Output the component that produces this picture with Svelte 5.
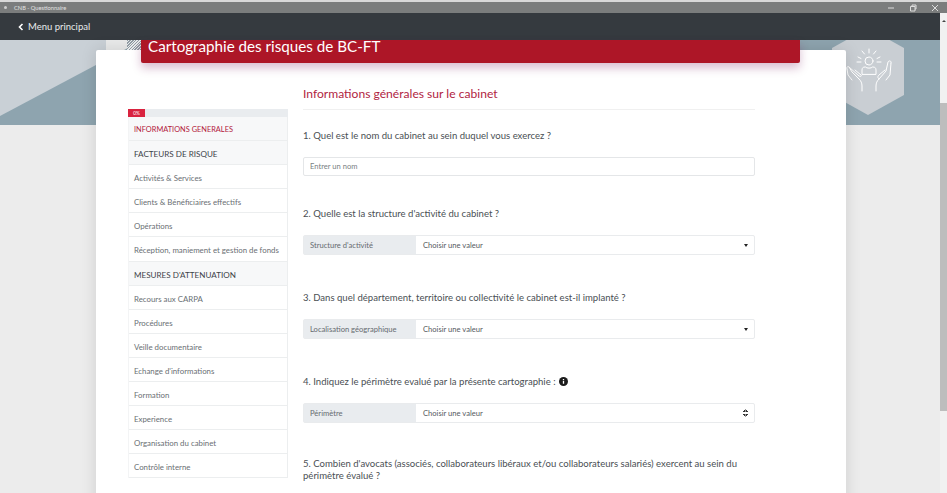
<script>
  const nav = [
    { t: 'INFORMATIONS GENERALES', k: 'active' },
    { t: 'FACTEURS DE RISQUE', k: 'head' },
    { t: 'Activités & Services' },
    { t: 'Clients & Bénéficiaires effectifs' },
    { t: 'Opérations' },
    { t: 'Réception, maniement et gestion de fonds' },
    { t: "MESURES D'ATTENUATION", k: 'head' },
    { t: 'Recours aux CARPA' },
    { t: 'Procédures' },
    { t: 'Veille documentaire' },
    { t: "Echange d'informations" },
    { t: 'Formation' },
    { t: 'Experience' },
    { t: 'Organisation du cabinet' },
    { t: 'Contrôle interne' }
  ];
</script>

<div class="window">
  <div class="titlebar">
    <div class="tb-left"><span class="dot"></span><span>CNB - Questionnaire</span></div>
    <div class="tb-right">
      <svg width="8" height="8" viewBox="0 0 8 8"><path d="M1 4h6" stroke="#ddd" fill="none"/></svg>
      <svg width="8" height="8" viewBox="0 0 8 8"><path d="M1.500 2.500h4.500v4.500h-4.500zM3 2.500v-1.500h4v4h-1" stroke="#ddd" fill="none"/></svg>
      <svg width="8" height="8" viewBox="0 0 8 8"><path d="M1 1l6 6M7 1l-6 6" stroke="#ddd" fill="none"/></svg>
    </div>
  </div>
  <div class="body">
    <div class="page">
      <header class="topnav">
        <svg width="6" height="8" viewBox="0 0 6 8"><path d="M4.500 1L1.500 4l3 3" stroke="#fff" stroke-width="1.600" fill="none"/></svg>
        <span>Menu principal</span>
      </header>
      <div class="content">
        <div class="hero">
          <svg class="hero-shape" width="940" height="85" viewBox="0 0 940 85">
            <rect x="106" width="40" height="12" fill="#e9eaea"/>
            <polygon points="0,76 143,0 940,0 940,85 0,85" fill="#8ea4af"/>
            <polygon points="868,-12 904,8 904,55 868,75 832,55 832,8" fill="#c9ced3"/>
          </svg>
          <svg class="hands" width="50" height="46" viewBox="0 0 50 46" fill="none" stroke="#fff" stroke-width="1" stroke-linecap="round" stroke-linejoin="round">
            <circle cx="25" cy="13" r="4"/>
            <path d="M18 26v-4c0-2 1-3 3-3h.500c1 1.500 6 1.500 7 0h.500c2 0 3 1 3 3v4z"/>
            <path d="M25 1v4M18 3l2.500 3M32 3l-2.500 3M14 9l3 1.500M36 9l-3 1.500M13 14h4M33 14h4"/>
            <path d="M3 21c-1-2 1-3 2-2l3 5 7 7c2 2 3 4 3 7v5M8 32l-4-5-1-6M5 19l10 9c2 1 3 0 2-1l-6-5"/>
            <path d="M47 15c1-2-2-3-3-1l-2 9-7 8c-2 2-3 4-3 7v5M42 32l4-5 1-12M35 31c-1-1-2-2 0-4l6-5"/>
          </svg>
        </div>
        <div class="card">
          <div class="banner-row">
            <h1 class="banner">Cartographie des risques de BC-FT</h1>
          </div>
          <div class="columns">
            <aside class="side">
              <div class="progress"><span class="chip">0%</span></div>
              <ul>
                {#each nav as n}
                  <li class={n.k ?? ''}>{n.t}</li>
                {/each}
              </ul>
            </aside>
            <section class="form">
              <h2>Informations générales sur le cabinet</h2>
              <p class="q q1">1. Quel est le nom du cabinet au sein duquel vous exercez ?</p>
              <div class="input">Entrer un nom</div>
              <p class="q q2">2. Quelle est la structure d'activité du cabinet ?</p>
              <div class="group">
                <span class="label">Structure d'activité</span>
                <span class="select">Choisir une valeur<i class="caret"></i></span>
              </div>
              <p class="q q3">3. Dans quel département, territoire ou collectivité le cabinet est-il implanté ?</p>
              <div class="group">
                <span class="label">Localisation géographique</span>
                <span class="select">Choisir une valeur<i class="caret"></i></span>
              </div>
              <p class="q q3">4. Indiquez le périmètre evalué par la présente cartographie :
                <svg class="info" width="9" height="9" viewBox="0 0 9 9"><circle cx="4.500" cy="4.500" r="4.500" fill="#1c1c1c"/><path d="M4.500 2v.9M4.500 3.800v3" stroke="#fff" stroke-width="1.300"/></svg>
              </p>
              <div class="group">
                <span class="label">Périmètre</span>
                <span class="select">Choisir une valeur<i class="updown"></i></span>
              </div>
              <p class="q q5">5. Combien d'avocats (associés, collaborateurs libéraux et/ou collaborateurs salariés) exercent au sein du périmètre évalué ?</p>
            </section>
          </div>
        </div>
      </div>
    </div>
    <div class="scrollbar">
      <span class="arrow"></span>
      <span class="thumb"></span>
    </div>
  </div>
</div>

<style>
  :global(body) { margin: 0; overflow: hidden; background: #ececec; }
  .window { width: 947px; height: 493px; overflow: hidden; display: flex; flex-direction: column; font-family: Lato, sans-serif; color: #4a4f54; border-top: 2px solid #d9d9d9; box-sizing: border-box; }
  .titlebar { height: 11px; flex: none; background: #7b7d7d; display: flex; justify-content: space-between; align-items: center; color: #e2e2e2; font-size: 5.700px; padding: 0 8px 0 4px; }
  .tb-left { display: flex; align-items: center; gap: 7px; }
  .dot { width: 3px; height: 3px; border-radius: 50%; background: #cfcfcf; }
  .tb-right { display: flex; gap: 14px; }
  .body { flex: 1; display: flex; min-height: 0; }
  .page { width: 940px; flex: none; }
  .topnav { height: 27px; background: #353a3f; color: #e8eaeb; display: flex; align-items: center; gap: 4px; padding-left: 18px; font-size: 9.500px; }
  .content { position: relative; padding-top: 10px; }
  .hero { position: absolute; inset: 0 0 auto 0; height: 85px; background: #c9d0d6; overflow: hidden; }
  .hero-shape { display: block; overflow: visible; }
  .hands { position: absolute; left: 844px; top: 8px; }
  .card { position: relative; width: 750px; margin: 0 0 0 96px; background: #fff; box-shadow: 0 0 16px rgba(0,0,0,.13); border-radius: 2px; height: 460px; }
  .banner-row { height: 0; padding-left: 45px; position: relative; }
  .banner-row::before { content: ""; position: absolute; left: 31px; top: -10px; width: 14px; height: 10px; background: repeating-linear-gradient(135deg, #8f9aa2 0 1px, #e6e9ea 1px 2px); }
  .banner { position: relative; margin: 0; width: 659px; height: 23px; transform: translateY(-10px); background: #ad1627; color: #fff; font-weight: 400; font-size: 15.200px; line-height: 13px; padding-left: 7px; box-sizing: border-box; border-radius: 0 0 2px 2px; box-shadow: 0 5px 10px rgba(120,20,90,.28); }
  .columns { display: flex; padding: 59px 0 0 32px; gap: 15px; }
  .side { width: 160px; flex: none; }
  .progress { height: 8px; background: #e9ecef; display: flex; }
  .chip { width: 17px; background: #d9233f; color: #fff; font-size: 4.800px; line-height: 8px; text-align: center; }
  ul { list-style: none; margin: 0; padding: 0; border-right: 1px solid #eceeef; border-left: 1px solid #f3f4f5; }
  li { height: 24.100px; line-height: 26px; box-sizing: border-box; border-bottom: 1px solid #eceeef; padding-left: 5px; font-size: 7.850px; color: #6a6f74; white-space: nowrap; overflow: hidden; }
  li.active { background: #f7f8f9; color: #b3203c; font-size: 7.400px; }
  li.head { background: #f7f8f9; color: #3d4349; font-size: 8.100px; }
  .form { width: 452px; flex: none; }
  h2 { margin: -24px 0 0; height: 24px; line-height: 18px; font-size: 12.100px; font-weight: 400; color: #b1243f; border-bottom: 1px solid #f0f0f0; box-sizing: content-box; }
  .q { margin: 0; font-size: 9.550px; line-height: 12px; color: #4a4f54; }
  .q1 { margin-top: 20px; margin-bottom: 15px; }
  .q2 { margin-top: 32px; margin-bottom: 15px; }
  .q3 { margin-top: 37px; margin-bottom: 15px; }
  .q5 { margin-top: 35px; }
  .info { vertical-align: -1px; margin-left: 1px; }
  .input { height: 19px; border: 1px solid #e4e6e8; border-radius: 2px; box-sizing: border-box; font-size: 7.600px; line-height: 17px; padding-left: 6px; color: #7a7f84; }
  .group { display: flex; height: 20px; border: 1px solid #e9ebed; border-radius: 2px; box-sizing: border-box; font-size: 7.600px; line-height: 18px; }
  .label { width: 112px; flex: none; background: #e9ecef; padding-left: 6px; box-sizing: border-box; color: #666b70; }
  .select { flex: 1; display: flex; justify-content: space-between; align-items: center; padding: 0 6px 0 7px; color: #55595e; }
  .caret { width: 0; height: 0; border: 2.500px solid transparent; border-top: 3px solid #222; border-bottom: 0; }
  .updown { width: 5px; height: 8px; background: linear-gradient(135deg, transparent 50%, #333 50%) 0 0/2.500px 3px no-repeat, linear-gradient(225deg, transparent 50%, #333 50%) 2.500px 0/2.500px 3px no-repeat, linear-gradient(45deg, transparent 50%, #333 50%) 0 5px/2.500px 3px no-repeat, linear-gradient(315deg, transparent 50%, #333 50%) 2.500px 5px/2.500px 3px no-repeat; }
  .scrollbar { width: 7px; background: #f1f1f1; position: relative; display: flex; flex-direction: column; }
  .arrow { height: 9px; margin-top: 4px; flex: none; }
  .arrow::before { content: ""; display: block; width: 0; height: 0; margin: 3px auto 0; border: 2px solid transparent; border-bottom: 2px solid #444; border-top: 0; }
  .thumb { margin-top: 77px; height: 308px; background: #bdbdbd; }
</style>
